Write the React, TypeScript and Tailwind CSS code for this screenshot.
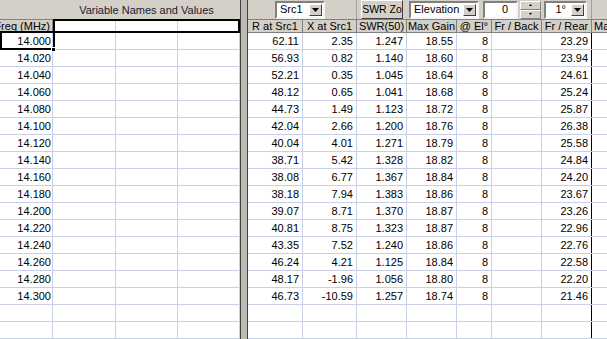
import React from "react";

const data = [
  ["14.000", "62.11", "2.35", "1.247", "18.55", "8", "", "23.29"],
  ["14.020", "56.93", "0.82", "1.140", "18.60", "8", "", "23.94"],
  ["14.040", "52.21", "0.35", "1.045", "18.64", "8", "", "24.61"],
  ["14.060", "48.12", "0.65", "1.041", "18.68", "8", "", "25.24"],
  ["14.080", "44.73", "1.49", "1.123", "18.72", "8", "", "25.87"],
  ["14.100", "42.04", "2.66", "1.200", "18.76", "8", "", "26.38"],
  ["14.120", "40.04", "4.01", "1.271", "18.79", "8", "", "25.58"],
  ["14.140", "38.71", "5.42", "1.328", "18.82", "8", "", "24.84"],
  ["14.160", "38.08", "6.77", "1.367", "18.84", "8", "", "24.20"],
  ["14.180", "38.18", "7.94", "1.383", "18.86", "8", "", "23.67"],
  ["14.200", "39.07", "8.71", "1.370", "18.87", "8", "", "23.26"],
  ["14.220", "40.81", "8.75", "1.323", "18.87", "8", "", "22.96"],
  ["14.240", "43.35", "7.52", "1.240", "18.86", "8", "", "22.76"],
  ["14.260", "46.24", "4.21", "1.125", "18.84", "8", "", "22.58"],
  ["14.280", "48.17", "-1.96", "1.056", "18.80", "8", "", "22.20"],
  ["14.300", "46.73", "-10.59", "1.257", "18.74", "8", "", "21.46"],
  ["", "", "", "", "", "", "", ""],
  ["", "", "", "", "", "", "", ""],
];

const headers = ["R at Src1", "X at Src1", "SWR(50)", "Max Gain", "@ El°", "Fr / Back", "Fr / Rear"];
const colW = ["w-[55px]", "w-[54px]", "w-[50px]", "w-[50px]", "w-[35px]", "w-[50px]", "w-[50px]"];
const leftW = ["w-[63px]", "w-[62px]", "w-[62px]"];

function Arrow() {
  return (
    <svg width="7" height="4" viewBox="0 0 7 4">
      <path d="M0 0h7L3.5 4z" fill="#000" />
    </svg>
  );
}

function Dropdown({ label, className }: { label: string; className: string }) {
  return (
    <div
      className={`h-[18px] flex bg-white border-2 border-t-[#808080] border-l-[#808080] border-b-[#f4f4f4] border-r-[#f4f4f4] ${className}`}
    >
      <div className="flex-1 flex items-center pl-[3px] overflow-hidden whitespace-nowrap">{label}</div>
      <div className="w-[13px] m-[1px] flex items-center justify-center bg-[#d4d0c8] border border-t-white border-l-white border-b-[#404040] border-r-[#404040]">
        <Arrow />
      </div>
    </div>
  );
}

export default function App() {
  return (
    <div className="w-[607px] h-[339px] overflow-hidden flex bg-[#d4d0c8] text-[11px] text-black font-['Liberation_Sans',Arial,sans-serif] leading-none">
      {/* left pane */}
      <div className="w-[240px] shrink-0 flex flex-col">
        <div className="h-[25px] flex items-end justify-center pl-[53px] pb-[3px] text-[#1a1a33]">
          Variable Names and Values
        </div>
        <div className="h-[19px] flex">
          <div className="w-[53px] flex items-center justify-end pr-[2px] whitespace-nowrap overflow-hidden border-t border-b border-r border-[#808080]">
            Freq (MHz)
          </div>
          <div className="flex-1 flex bg-white border-2 border-black">
            <div className="w-[61px] border-r border-[#c8cfe6]" />
            <div className="w-[62px] border-r border-[#c8cfe6]" />
            <div className="flex-1" />
          </div>
        </div>
        <div className="relative bg-white flex-1">
          {data.map((r, i) => (
            <div key={i} className="h-[17px] flex border-b border-[#c8cfe6]">
              <div className="w-[53px] flex items-center justify-end pr-[1px] border-r border-[#c8cfe6]">{r[0]}</div>
              {leftW.map((w, j) => (
                <div key={j} className={`${w} border-r border-[#c8cfe6]`} />
              ))}
            </div>
          ))}
          <div className="absolute left-0 top-[-2px] w-[55px] h-[19px] border-2 border-black" />
          <div className="absolute left-[51px] top-[14px] w-[5px] h-[5px] bg-black border border-white" />
        </div>
      </div>

      {/* splitter */}
      <div className="w-[8px] shrink-0 bg-[#bdbab4] border-l border-r border-[#404040]" />

      {/* right pane */}
      <div className="flex-1 flex flex-col min-w-0">
        <div className="h-[25px] flex items-center">
          <div className="w-[109px] h-full shrink-0 flex items-center pl-[27px] border-r border-[#a0a0a0]">
            <Dropdown label="Src1" className="w-[50px]" />
          </div>
          <div className="w-[235px] h-full shrink-0 flex items-center border-r border-[#a0a0a0]">
            <div className="ml-[4px] w-[42px] h-[19px] flex items-center justify-center whitespace-nowrap overflow-hidden text-[10.5px] border border-t-white border-l-white border-b-[#404040] border-r-[#404040]">
              SWR Zo
            </div>
            <Dropdown label="Elevation" className="ml-[6px] w-[70px]" />
            <div className="ml-[4px] w-[35px] h-[18px] flex items-center justify-end pr-[8px] bg-white border-2 border-t-[#808080] border-l-[#808080] border-b-[#f4f4f4] border-r-[#f4f4f4]">
              0
            </div>
            <div className="ml-[2px] w-[21px] h-[18px] flex flex-col">
              <div className="flex-1 flex items-center justify-center border border-t-white border-l-white border-b-[#808080] border-r-[#808080]">
                <svg width="3" height="2" viewBox="0 0 3 2"><path d="M1.5 0L3 2H0z" fill="#000" /></svg>
              </div>
              <div className="flex-1 flex items-center justify-center border border-t-white border-l-white border-b-[#808080] border-r-[#808080]">
                <svg width="3" height="2" viewBox="0 0 3 2"><path d="M0 0h3L1.5 2z" fill="#000" /></svg>
              </div>
            </div>
            <Dropdown label="1°" className="ml-[3px] w-[43px] [&>div:first-child]:justify-end [&>div:first-child]:pr-[4px]" />
          </div>
          <div className="flex-1" />
        </div>
        <div className="h-[19px] flex border-t border-b border-[#808080]">
          {headers.map((h, i) => (
            <div
              key={i}
              className={`${colW[i]} shrink-0 flex items-center justify-center whitespace-nowrap overflow-hidden border-r border-[#808080]`}
            >
              {h}
            </div>
          ))}
          <div className="flex-1 flex items-center pl-[2px] whitespace-nowrap overflow-hidden">Max</div>
        </div>
        <div className="bg-white flex-1">
          {data.map((r, i) => (
            <div key={i} className="h-[17px] flex border-b border-[#c8cfe6]">
              {colW.map((w, j) => (
                <div
                  key={j}
                  className={`${w} shrink-0 flex items-center justify-end pr-[3px] border-r ${
                    j === 6 ? "border-black" : "border-[#c8cfe6]"
                  }`}
                >
                  {r[j + 1]}
                </div>
              ))}
              <div className="flex-1" />
            </div>
          ))}
        </div>
      </div>
    </div>
  );
}
